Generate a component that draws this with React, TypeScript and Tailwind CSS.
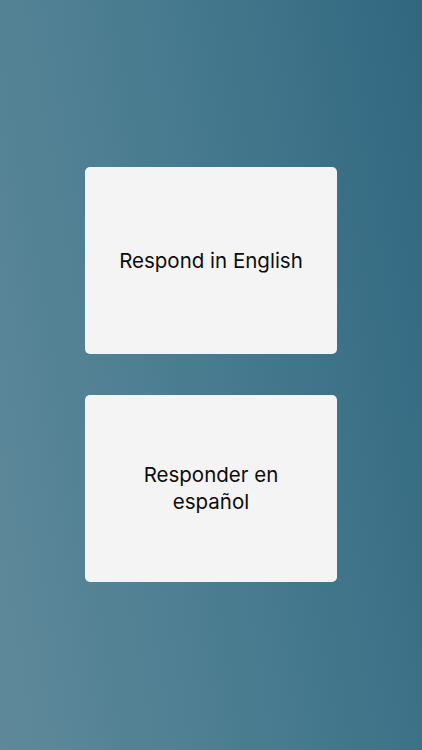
export default function App() {
    return (
        <div className="w-full h-[750px] flex flex-col items-center justify-center gap-[41px] pb-[2px] bg-[linear-gradient(80deg,#5f899b_0%,#487b8f_50%,#316880_100%)] font-['Inter','Noto_Sans',sans-serif]">
            <button className="w-[252px] h-[187px] rounded-[5px] bg-[#f4f4f4] flex items-center justify-center px-6 text-center text-[20.5px] leading-[27px] text-[#0d0d0d]">
                Respond in English
            </button>
            <button className="w-[252px] h-[187px] rounded-[5px] bg-[#f4f4f4] flex items-center justify-center px-6 text-center text-[20.5px] leading-[27px] text-[#0d0d0d]">
                Responder en español
            </button>
        </div>
    )
}
